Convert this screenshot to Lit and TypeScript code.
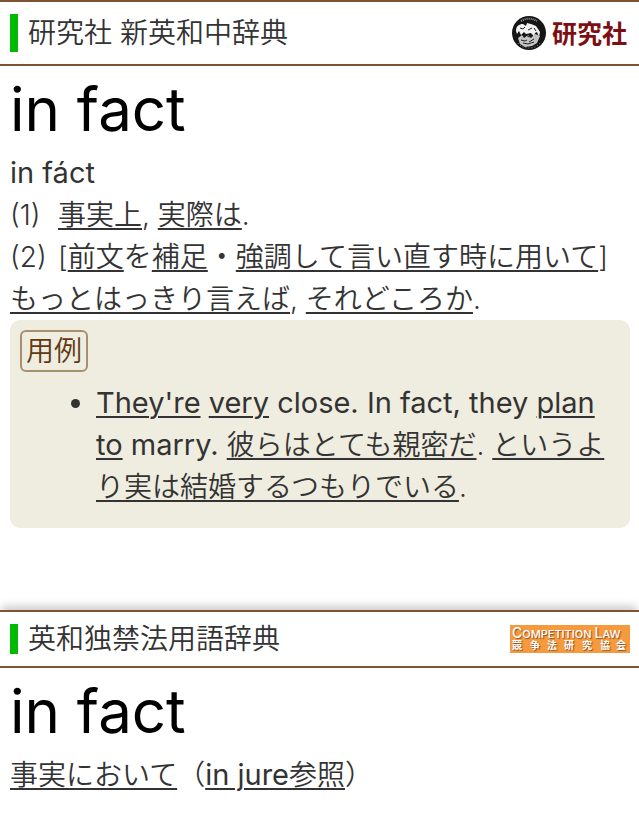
import { LitElement, html, css } from "lit";
import { customElement } from "lit/decorators.js";

const link = (text: string) => html`<a href="#">${text}</a>`;

@customElement("app-root")
export class AppRoot extends LitElement {
  static styles = css`
    :host {
      display: block;
      font-family: Inter, "Noto Sans CJK JP", sans-serif;
      font-weight: 350;
      font-size: 28px;
      line-height: 42px;
      color: #333;
      background: #fff;
    }
    .head {
      display: flex;
      align-items: center;
      justify-content: space-between;
      padding: 12px 9px 12px 10px;
      border-top: 2px solid #7d5534;
      border-bottom: 2px solid #7d5534;
    }
    .later .head {
      box-shadow: 0 -6px 8px -2px #ccc;
    }
    .title {
      margin: 0;
      padding-left: 10px;
      border-left: 8px solid #00b900;
      font: inherit;
      line-height: 38px;
    }
    .later .title {
      line-height: 30px;
    }
    .body {
      padding: 0 9px 0 10px;
    }
    .word {
      margin: 0;
      font-size: 60px;
      font-weight: 400;
      line-height: 86px;
      color: #000;
    }
    p {
      margin: 0;
    }
    .en {
      font-size: 29px;
      font-weight: 390;
      line-height: 1;
    }
    .num {
      display: inline-block;
      width: 48px;
    }
    a {
      color: inherit;
      text-decoration: underline;
      text-decoration-thickness: 2px;
      text-underline-offset: 3px;
    }
    .example {
      padding: 10px 10px 20px;
      border-radius: 10px;
      background: #efede0;
    }
    .tag {
      display: inline-block;
      padding: 0 4px;
      border: 2px solid #a6906f;
      border-radius: 6px;
      line-height: 38px;
      color: #603912;
      vertical-align: top;
    }
    ul {
      margin: 10px 0 0;
      padding-left: 76px;
    }
    .later {
      margin-top: 82px;
    }
    .kenkyusha {
      display: block;
      width: 120px;
      height: 38px;
    }
    .law {
      display: block;
      width: 120px;
      height: 28px;
      overflow: visible;
    }
    .law text {
      fill: #fff;
      text-shadow: 1px 1px 1px #8a5220;
    }
  `;

  private kenkyusha() {
    return html`<svg class="kenkyusha" viewBox="0 0 120 38" role="img" aria-label="研究社">
      <circle cx="19" cy="19" r="17" fill="#161616" />
      <path d="M11 7c5-3 11-3 16 0" fill="none" stroke="#999" stroke-width="2" stroke-dasharray="1 1" />
      <path
        d="M6 17c0-5 3-7 7-7l3 2 1-3 4 1 5 2 4 6-1 5-2-5-2 1-1 4-3-4-5 1-2-2-3 3-2-4-2 3z"
        fill="#f2f2f2"
      />
      <path
        d="M8 24l4-3 2 3 4-3 3 3 4-4 5 2-3 7-5 3-7 1-5-3z"
        fill="#c4c4c4"
      />
      <path
        d="M10 14l3 1 2-2m3 3l4-2m2 0l2 3M11 26l4 1 2-1m2 2l5-3M13 29l5 1 6-2M16 21l3 2 4-2"
        fill="none"
        stroke="#222"
        stroke-width="1"
      />
      <path d="M8 29c3 4 7 5 11 5s8-1 11-5" fill="none" stroke="#888" stroke-width="1" stroke-dasharray="1 2" />
      <text x="42" y="29" font-size="25" font-weight="700" fill="#7d0f14">研究社</text>
    </svg>`;
  }

  private law() {
    return html`<svg class="law" viewBox="0 0 120 28" role="img" aria-label="Competition Law 競争法研究協会">
      <rect width="120" height="28" fill="#f79a3e" />
      <text x="2" y="13" font-size="11" font-weight="500"><tspan font-size="14">C</tspan>OMPETITION <tspan font-size="14">L</tspan>AW</text>
      <text x="2 20 37 54 72 90 106" y="24" font-size="10" font-weight="700">競争法研究協会</text>
    </svg>`;
  }

  render() {
    return html`
      <main lang="ja">
        <section>
          <header class="head">
            <h2 class="title">研究社 新英和中辞典</h2>
            ${this.kenkyusha()}
          </header>
          <div class="body">
            <h1 class="word">in fact</h1>
            <p><span class="en">in fáct</span></p>
            <p><span class="num">(1)</span>${link("事実上")}, ${link("実際は")}.</p>
            <p>
              <span class="num">(2)</span>[${link("前文")}を${link("補足")}・${link("強調して言い直す時に用いて")}]
              ${link("もっとはっきり言えば")}, ${link("それどころか")}.
            </p>
            <div class="example">
              <span class="tag">用例</span>
              <ul>
                <li>
                  <span class="en">${link("They're")} ${link("very")} close. In fact, they ${link("plan")}
                  ${link("to")} marry. </span>${link("彼らはとても親密だ")}. ${link("というより実は結婚するつもりでいる")}.
                </li>
              </ul>
            </div>
          </div>
        </section>
        <section class="later">
          <header class="head">
            <h2 class="title">英和独禁法用語辞典</h2>
            ${this.law()}
          </header>
          <div class="body">
            <h1 class="word">in fact</h1>
            <p>${link("事実において")}（<a href="#"><span class="en">in jure</span>参照</a>）</p>
          </div>
        </section>
      </main>
    `;
  }
}
